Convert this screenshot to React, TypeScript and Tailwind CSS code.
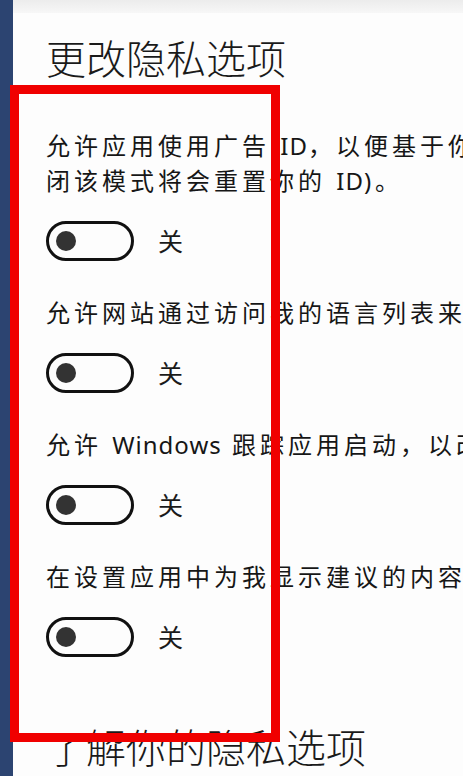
import React from "react";

const FONT = { fontFamily: '"Noto Sans", "Noto Sans CJK SC", sans-serif' };

function Toggle() {
  return (
    <div className="flex items-center h-[40px]">
      <div className="w-[88px] h-[40px] rounded-full border-[3px] border-[#111111] flex items-center pl-[7px] shrink-0">
        <div className="w-[20px] h-[20px] rounded-full bg-[#333333]" />
      </div>
      <span className="ml-[24px] text-[25px] leading-[40px] text-[#1a1a1a]">关</span>
    </div>
  );
}

function Latin({ children }: { children: React.ReactNode }) {
  return <span className="tracking-[1px]">{children}</span>;
}

function Item({ lines }: { lines: React.ReactNode[] }) {
  return (
    <div className="flex flex-col">
      <div className="flex flex-col mb-[23px]">
        {lines.map((l, i) => (
          <div
            key={i}
            className="whitespace-nowrap text-[24px] leading-[35px] tracking-[4px] text-[#161616]"
          >
            {l}
          </div>
        ))}
      </div>
      <Toggle />
    </div>
  );
}

export default function App() {
  return (
    <div
      className="relative w-[463px] h-[776px] overflow-hidden bg-[#fdfdfd] flex"
      style={FONT}
    >
      <div className="w-[13px] shrink-0 bg-[#2c4471]" />
      <div className="flex-1 flex flex-col min-w-0">
        <div className="h-[13px] bg-gradient-to-b from-[#ececec] to-[#f7f7f7]" />
        <div className="pl-[33px] flex flex-col">
          <h1 className="mt-[22px] text-[40px] leading-[48px] font-light text-[#1a1a1a] whitespace-nowrap">
            更改隐私选项
          </h1>
          <div className="mt-[45px] flex flex-col gap-[34px]">
            <Item
              lines={[
                <>
                  允许应用使用广告 <Latin>ID</Latin>，以便基于你的应用活动向你显示更具个性化的广告(关
                </>,
                <>
                  闭该模式将会重置你的 <Latin>ID</Latin>)。
                </>,
              ]}
            />
            <Item lines={["允许网站通过访问我的语言列表来提供本地相关内容"]} />
            <Item
              lines={[
                <>
                  允许 <Latin>Windows</Latin> 跟踪应用启动，以改进开始和搜索结果
                </>,
              ]}
            />
            <Item lines={["在设置应用中为我显示建议的内容"]} />
          </div>
          <h2 className="mt-[67px] text-[40px] leading-[48px] font-light text-[#1a1a1a] whitespace-nowrap">
            了解你的隐私选项
          </h2>
        </div>
      </div>
      <div className="absolute left-[10px] top-[85px] w-[270px] h-[657px] border-[9px] border-[#f00000] pointer-events-none" />
    </div>
  );
}
